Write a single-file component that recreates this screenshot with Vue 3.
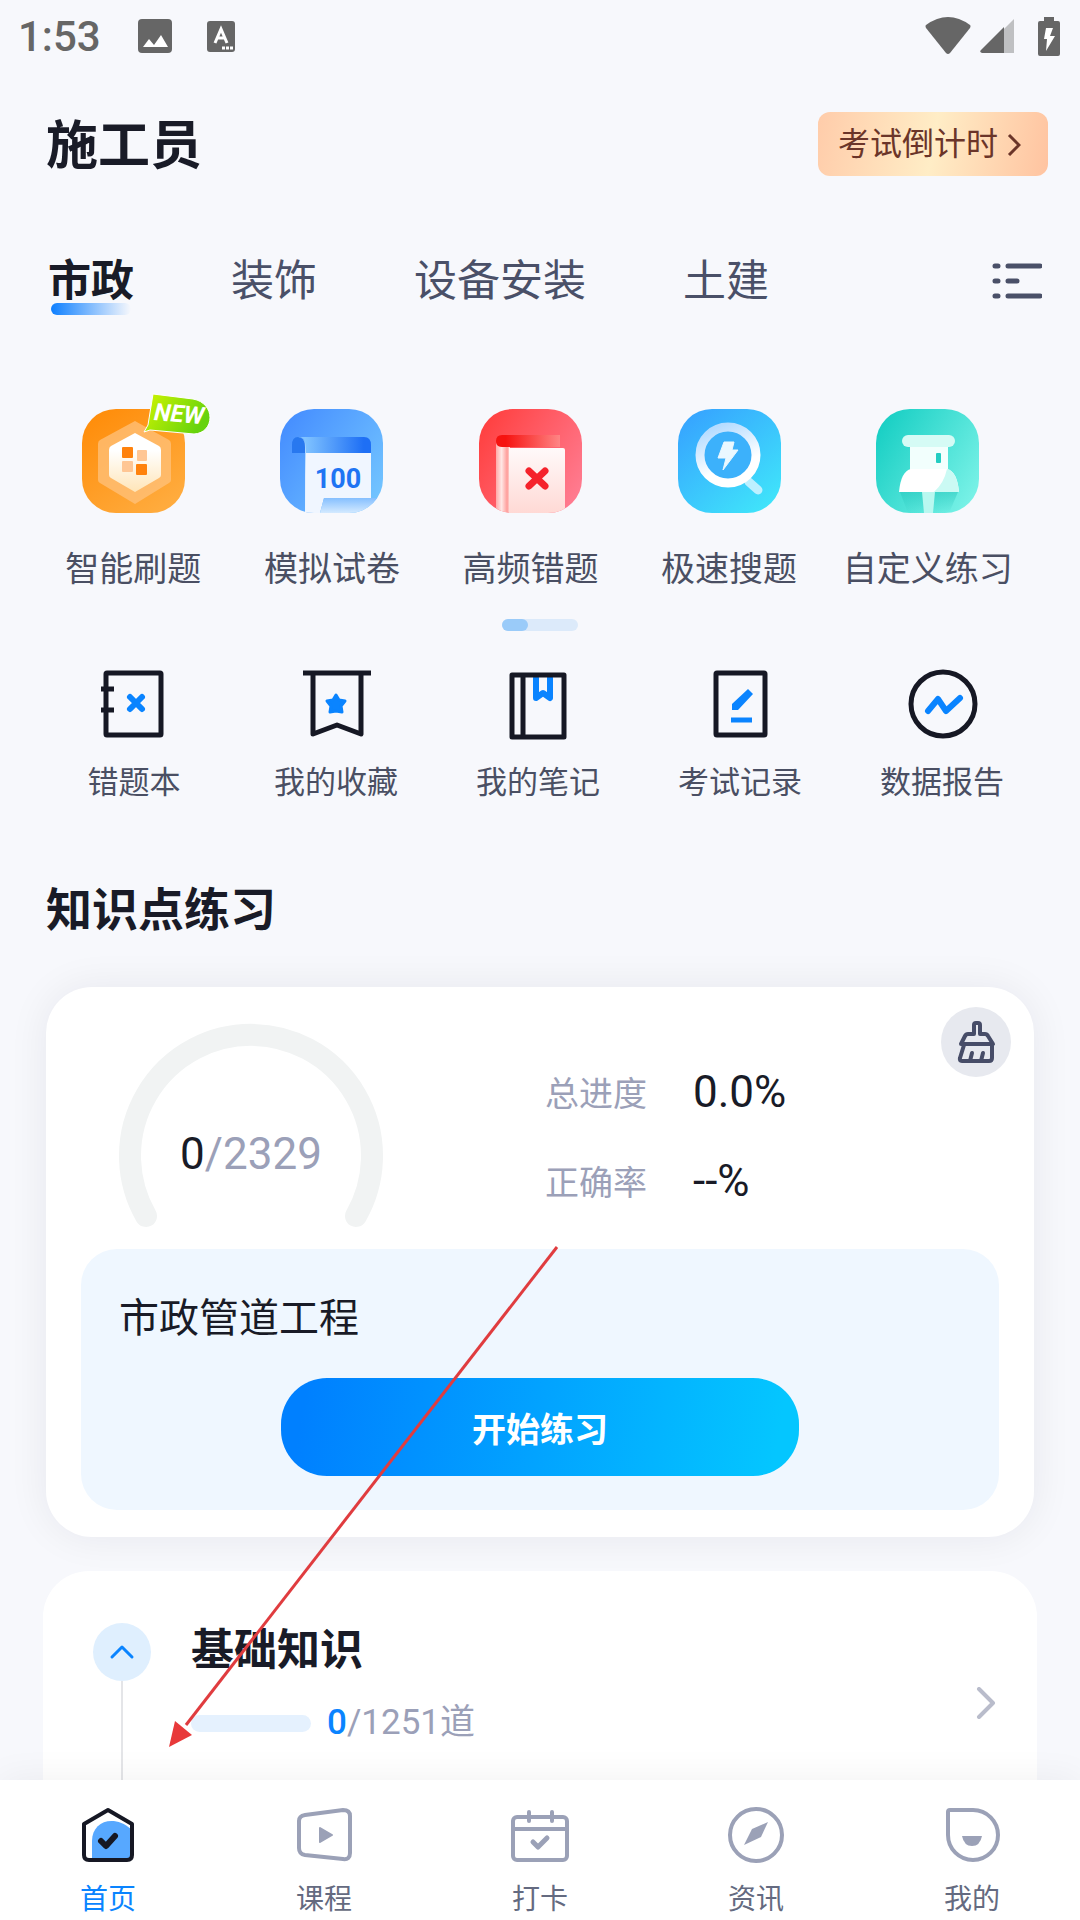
<template>
  <div class="app">
    <div class="status-bar">
      <span class="clock">1:53</span>
      <svg class="status-image" width="34" height="34" viewBox="0 0 34 34">
        <rect width="34" height="34" rx="4" fill="#666"/>
        <path d="M5 28l6-8 5 6 7-10 7 12z" fill="#fff"/>
      </svg>
      <svg class="status-input" width="28" height="31" viewBox="0 0 28 31">
        <rect width="28" height="31" rx="3" fill="#666"/>
        <path d="M8 22l6-14 6 14M11 17h6" fill="none" stroke="#fff" stroke-width="3"/>
        <path d="M15 27h3M19 27h3M23 27h3" stroke="#fff" stroke-width="3"/>
      </svg>
      <span class="spacer"></span>
      <svg width="46" height="38" viewBox="0 0 46 38">
        <path d="M1 8Q23-8 45 8Q46 9 45 11L25 36Q23 38 21 36L1 11Q0 9 1 8z" fill="#666"/>
      </svg>
      <svg class="status-signal" width="34" height="34" viewBox="0 0 34 34">
        <path d="M34 0V34H24V10z" fill="#bfc0c2"/>
        <path d="M24 8V34H2Q-1 33 1 31z" fill="#666"/>
      </svg>
      <svg class="status-battery" width="22" height="39" viewBox="0 0 22 39">
        <path d="M6 0h10v4h4q2 0 2 2v31q0 2-2 2H2q-2 0-2-2V6q0-2 2-2h4z" fill="#666"/>
        <path d="M8 11h7l-3 8h5L8 34l1-12H6z" fill="#fff"/>
      </svg>
    </div>

    <main class="content">
      <header class="page-header">
        <h1>施工员</h1>
        <button class="countdown">
          考试倒计时
          <svg width="14" height="24" viewBox="0 0 14 24" fill="none" stroke="#6b3529" stroke-width="3">
            <path d="M2 3l10 10L2 23"/>
          </svg>
        </button>
      </header>

      <nav class="tabs">
        <button
          v-for="tab in tabs"
          :key="tab"
          class="tab"
          :class="{ 'active': tab === activeTab }"
          @click="activeTab = tab"
        >{{ tab }}</button>
        <button class="tab-menu" aria-label="全部专业">
          <svg width="50" height="38" viewBox="0 0 50 38" fill="none" stroke="#4a5068" stroke-width="5" stroke-linecap="round">
            <path d="M3 4h3M16 4h32M3 19h3M16 19h9M3 34h3M16 34h32"/>
          </svg>
        </button>
      </nav>

      <section class="features">
        <a class="feature" href="#">
          <svg class="feature-icon" viewBox="0 0 103 104">
            <defs>
              <linearGradient id="orange" x1="0" y1="0" x2="0.7" y2="1">
                <stop offset="0" stop-color="#ff8a05"/>
                <stop offset="1" stop-color="#ffab3d"/>
              </linearGradient>
              <linearGradient id="cream" x1="0" y1="0" x2="0" y2="1">
                <stop offset="0.3" stop-color="#fff"/>
                <stop offset="1" stop-color="#ffe5b8"/>
              </linearGradient>
              <linearGradient id="lime" x1="0" y1="0" x2="1" y2="0.4">
                <stop offset="0" stop-color="#d2f500"/>
                <stop offset="1" stop-color="#67d30d"/>
              </linearGradient>
            </defs>
            <rect width="103" height="104" rx="34" fill="url(#orange)"/>
            <path d="M53 12L87 31Q89 32 89 35V71Q89 73 87 74L53 95L18 74Q16 73 16 71V35Q16 32 18 31z" fill="#ffc27c" opacity="0.75"/>
            <path d="M53 24L77 37Q79 38 79 41V66Q79 68 77 69L53 83L29 69Q27 68 27 66V41Q27 38 29 37z" fill="url(#cream)"/>
            <g fill="#ff820d">
              <rect x="40" y="38" width="11" height="11" rx="1"/>
              <rect x="54" y="55" width="11" height="11" rx="1"/>
            </g>
            <g fill="#ffc694">
              <rect x="55" y="41" width="10" height="11" rx="1"/>
              <rect x="40" y="52" width="11" height="11" rx="1"/>
            </g>
            <path d="M71-15L111-10C134-6 133 24 112 25L68 21L62 23L66 16z" fill="url(#lime)" stroke="#fff" stroke-width="1"/>
            <text x="97" y="13" class="new-text" text-anchor="middle" transform="rotate(5 96 6)">NEW</text>
          </svg>
          <span>智能刷题</span>
        </a>

        <a class="feature" href="#">
          <svg class="feature-icon" viewBox="0 0 103 104">
            <defs>
              <linearGradient id="blue" x1="0" y1="0.1" x2="1" y2="0.8">
                <stop offset="0" stop-color="#448cff"/>
                <stop offset="1" stop-color="#72c4ff"/>
              </linearGradient>
              <linearGradient id="roll" x1="0" y1="0" x2="1" y2="0">
                <stop offset="0.1" stop-color="#80c3ff"/>
                <stop offset="0.9" stop-color="#1e6ff5"/>
              </linearGradient>
              <linearGradient id="fold" x1="0" y1="0" x2="0" y2="1">
                <stop offset="0" stop-color="#8bc7ff"/>
                <stop offset="0.5" stop-color="#ddecff"/>
                <stop offset="1" stop-color="#eef6ff"/>
              </linearGradient>
              <linearGradient id="shade" x1="0" y1="0" x2="0" y2="1">
                <stop offset="0" stop-color="#85bfff"/>
                <stop offset="1" stop-color="#d4eaff"/>
              </linearGradient>
              <clipPath id="tile"><rect width="103" height="104" rx="34"/></clipPath>
            </defs>
            <g clip-path="url(#tile)">
              <rect width="103" height="104" fill="url(#blue)"/>
              <path d="M18 28H84Q91 28 91 36V44H25V38z" fill="url(#roll)"/>
              <path d="M12 44V36Q12 28 18 28Q25 28 25 36V44z" fill="#2878ef"/>
              <path d="M25 44H91V89H44L40 104H25z" fill="#f0f6ff"/>
              <path d="M18 28Q25 28 25 38V104H26V40Q26 28 18 28z" fill="url(#fold)"/>
              <path d="M44 89H98L90 104H40z" fill="url(#shade)"/>
              <text x="58" y="79" class="paper-text" text-anchor="middle">100</text>
            </g>
          </svg>
          <span>模拟试卷</span>
        </a>

        <a class="feature" href="#">
          <svg class="feature-icon" viewBox="0 0 103 104">
            <defs>
              <linearGradient id="red" x1="0" y1="0.2" x2="1" y2="0.8">
                <stop offset="0" stop-color="#ff4040"/>
                <stop offset="1" stop-color="#ff7c91"/>
              </linearGradient>
              <linearGradient id="cover" x1="0" y1="0" x2="1" y2="0">
                <stop offset="0.15" stop-color="#f61310"/>
                <stop offset="1" stop-color="#ff8585"/>
              </linearGradient>
              <linearGradient id="sheet" x1="0" y1="0" x2="0" y2="1">
                <stop offset="0" stop-color="#fffafa"/>
                <stop offset="1" stop-color="#ffd9d5"/>
              </linearGradient>
              <linearGradient id="spine" x1="0" y1="0" x2="1" y2="0">
                <stop offset="0" stop-color="#ffaaa8"/>
                <stop offset="0.4" stop-color="#ffe7e5"/>
                <stop offset="0.8" stop-color="#ff9c99"/>
                <stop offset="1" stop-color="#ffe5e3"/>
              </linearGradient>
            </defs>
            <g clip-path="url(#tile)">
              <rect width="103" height="104" fill="url(#red)"/>
              <path d="M23 26H81V38H23Q17 38 17 32Q17 26 23 26z" fill="url(#cover)"/>
              <path d="M17 34Q18 38 23 38H31V104H17z" fill="url(#spine)"/>
              <path d="M30 39H84Q86 39 86 41V104H30z" fill="url(#sheet)"/>
              <path d="M50 62L66 77M66 62L50 77" stroke="#f5222b" stroke-width="7" stroke-linecap="round"/>
            </g>
          </svg>
          <span>高频错题</span>
        </a>

        <a class="feature" href="#">
          <svg class="feature-icon" viewBox="0 0 103 104">
            <defs>
              <linearGradient id="cyan" x1="0.1" y1="0" x2="0.9" y2="1">
                <stop offset="0" stop-color="#36a2ff"/>
                <stop offset="1" stop-color="#40e7fa"/>
              </linearGradient>
              <linearGradient id="ring" x1="0" y1="0" x2="0.4" y2="1">
                <stop offset="0.1" stop-color="#b5dcff"/>
                <stop offset="0.8" stop-color="#fff"/>
              </linearGradient>
            </defs>
            <rect width="103" height="104" rx="34" fill="url(#cyan)"/>
            <path d="M71 73L80 81" stroke="#bdf0ff" stroke-width="9" stroke-linecap="round"/>
            <circle cx="50" cy="46" r="28" fill="#3cb1fb" stroke="url(#ring)" stroke-width="9"/>
            <path d="M46 33H56L54 41H60L45 61L48 49H40z" fill="#eaf8ff" stroke="#eaf8ff" stroke-width="1" stroke-linejoin="round"/>
          </svg>
          <span>极速搜题</span>
        </a>

        <a class="feature" href="#">
          <svg class="feature-icon" viewBox="0 0 103 104">
            <defs>
              <linearGradient id="teal" x1="0" y1="0.2" x2="1" y2="0.8">
                <stop offset="0" stop-color="#18cfc4"/>
                <stop offset="1" stop-color="#7af2e7"/>
              </linearGradient>
              <linearGradient id="pin-shadow" x1="0" y1="0" x2="0" y2="1">
                <stop offset="0" stop-color="#26c5bb" stop-opacity="0.5"/>
                <stop offset="1" stop-color="#26c5bb" stop-opacity="0"/>
              </linearGradient>
            </defs>
            <g clip-path="url(#tile)">
              <rect width="103" height="104" fill="url(#teal)"/>
              <path d="M24 83H82L73 104H32z" fill="url(#pin-shadow)"/>
              <path d="M46 83H59L57 104H48z" fill="#b9f8f0"/>
              <rect x="34" y="36" width="38" height="26" fill="#f2fffd"/>
              <rect x="26" y="26" width="53" height="12" rx="6" fill="#d5fbf5"/>
              <rect x="60" y="44" width="5" height="10" rx="1" fill="#23cdc2"/>
              <path d="M35 60H71Q81 62 83 83H23Q25 62 35 60z" fill="#fff"/>
              <path d="M71 60Q81 62 83 83H58Q68 74 71 60z" fill="#cbfaf4"/>
            </g>
          </svg>
          <span>自定义练习</span>
        </a>
      </section>

      <div class="pager"><i></i></div>

      <section class="shortcuts">
        <a class="shortcut" href="#">
          <svg class="line-icon" viewBox="0 0 72 72">
            <rect x="8" y="4" width="55" height="62" rx="1"/>
            <path d="M3 20h13M3 41h13"/>
            <path class="accent" d="M32 28l12 12M44 28L32 40" stroke-linecap="butt"/>
          </svg>
          <span>错题本</span>
        </a>
        <a class="shortcut" href="#">
          <svg class="line-icon" viewBox="0 0 72 72">
            <path d="M3 4h68M13 4v61l24-9 24 9V4"/>
            <path class="accent-fill" d="M36 26l3 5 6 1-4 5 1 6-6-1-6 1 1-6-4-5 6-1z"/>
          </svg>
          <span>我的收藏</span>
        </a>
        <a class="shortcut" href="#">
          <svg class="line-icon" viewBox="0 0 72 72">
            <path class="accent" d="M34 9v20l7-5 7 5V9"/>
            <path d="M10 6h52v62H10zM21 6v62"/>
          </svg>
          <span>我的笔记</span>
        </a>
        <a class="shortcut" href="#">
          <svg class="line-icon" viewBox="0 0 72 72">
            <rect x="12" y="4" width="49" height="62" rx="1"/>
            <path d="M28 41v-6l16-15 5 5-15 16z" fill="#0a84ff" stroke="none"/>
            <path d="M27 51h21" stroke="#0a84ff"/>
          </svg>
          <span>考试记录</span>
        </a>
        <a class="shortcut" href="#">
          <svg class="line-icon" viewBox="0 0 72 72">
            <circle cx="37" cy="35" r="32"/>
            <path class="accent" d="M22 42l10-12 8 12 14-13"/>
          </svg>
          <span>数据报告</span>
        </a>
      </section>

      <h2>知识点练习</h2>

      <section class="card progress-card">
        <div class="summary">
          <div class="gauge">
            <svg width="266" height="206" viewBox="0 0 266 206" fill="none">
              <path d="M28 193A121 121 0 1 1 238 193" stroke="#f1f3f3" stroke-width="22" stroke-linecap="round"/>
            </svg>
            <div class="gauge-text">0<span>/2329</span></div>
          </div>
          <dl class="stats">
            <dt>总进度</dt>
            <dd>0.0%</dd>
            <dt>正确率</dt>
            <dd>--%</dd>
          </dl>
          <button class="clear-btn" aria-label="清空记录">
            <svg width="70" height="70" viewBox="0 0 70 70" fill="none" stroke="#474d68" stroke-width="4" stroke-linejoin="round" stroke-linecap="round">
              <path d="M33 27V18q0-2 2-2h2q2 0 2 2v9h5q2 0 3 2l5 8H20l4-8q1-2 3-2z"/>
              <path d="M23 38l-4 13q-1 3 2 3h27q3 0 3-3V38M31 46l-2 8M42 46l-2 8"/>
            </svg>
          </button>
        </div>
        <div class="chapter">
          <h3>市政管道工程</h3>
          <button class="start-btn">开始练习</button>
        </div>
      </section>

      <section class="card topic-card">
        <div class="topic-rail">
          <button class="collapse-btn" aria-label="收起">
            <svg width="26" height="16" viewBox="0 0 26 16" fill="none" stroke="#0a84ff" stroke-width="3" stroke-linecap="round" stroke-linejoin="round">
              <path d="M3 13L13 3l10 10"/>
            </svg>
          </button>
        </div>
        <div class="topic-body">
          <h3>基础知识</h3>
          <div class="topic-progress">
            <span class="bar"></span>
            <span class="count"><b>0</b>/1251道</span>
          </div>
        </div>
        <svg class="topic-arrow" width="20" height="32" viewBox="0 0 20 32" fill="none" stroke="#b9bccb" stroke-width="4" stroke-linecap="round" stroke-linejoin="round">
          <path d="M3 2l14 14L3 30"/>
        </svg>
      </section>
    </main>

    <nav class="tab-bar">
      <a class="tab-item active" href="#">
        <svg width="60" height="60" viewBox="0 0 60 60" fill="none">
          <path d="M14 53V36C14 16 36 9 53 24V53z" fill="#57a8ff"/>
          <path d="M30 5L54 19V50Q54 55 49 55H11Q6 55 6 50V19z" stroke="#161824" stroke-width="4" stroke-linejoin="round"/>
          <path d="M23 36l5 5 9-10" stroke="#161824" stroke-width="6" stroke-linecap="round" stroke-linejoin="round"/>
        </svg>
        <span>首页</span>
      </a>
      <a class="tab-item" href="#">
        <svg width="60" height="60" viewBox="0 0 60 60" fill="none" stroke="#9ba1b7" stroke-width="4">
          <path d="M11 10L49 5Q56 5 56 11V48Q56 55 49 54L11 50Q5 49 5 43V16Q5 11 11 10z"/>
          <path d="M26 23l12 7-12 7z" fill="#9ba1b7" stroke-width="2" stroke-linejoin="round"/>
        </svg>
        <span>课程</span>
      </a>
      <a class="tab-item" href="#">
        <svg width="60" height="60" viewBox="0 0 60 60" fill="none" stroke="#9ba1b7" stroke-width="4" stroke-linecap="round" stroke-linejoin="round">
          <rect x="3" y="12" width="54" height="43" rx="4"/>
          <path d="M3 24h54M19 7v9M42 7v9"/>
          <path d="M23 37l5 5 9-9" stroke-width="5"/>
        </svg>
        <span>打卡</span>
      </a>
      <a class="tab-item" href="#">
        <svg width="60" height="60" viewBox="0 0 60 60" fill="none">
          <circle cx="30" cy="30" r="26" stroke="#9ba1b7" stroke-width="4"/>
          <path d="M42 17l-7 15-17 8 8-16z" fill="#9ba1b7"/>
        </svg>
        <span>资讯</span>
      </a>
      <a class="tab-item" href="#">
        <svg width="60" height="60" viewBox="0 0 60 60" fill="none">
          <path d="M8 5H31A25 25 0 1 1 6 30V7Q6 5 8 5z" stroke="#9ba1b7" stroke-width="4"/>
          <path d="M20 31h20q-2 10-10 10t-10-10z" fill="#9ba1b7"/>
        </svg>
        <span>我的</span>
      </a>
    </nav>

    <svg class="pointer-line" width="392" height="502" viewBox="0 0 392 502">
      <path d="M388 1L17 479" stroke="#e03c3f" stroke-width="3"/>
      <path d="M0 501l6-26 17 14z" fill="#e8393a"/>
    </svg>
  </div>
</template>

<script setup>
import { ref } from 'vue'

const tabs = ['市政', '装饰', '设备安装', '土建']
const activeTab = ref('市政')
</script>

<style>
body {
  margin: 0;
  background: #f7f8fc;
}
</style>

<style scoped>
.app {
  position: relative;
  display: flex;
  flex-direction: column;
  height: 100vh;
  overflow: hidden;
  background: #f7f8fc;
  color: #191b27;
  font-family: Roboto, "Noto Sans CJK SC", sans-serif;
}

button {
  border: none;
  padding: 0;
  background: none;
  font-family: inherit;
  color: inherit;
  cursor: pointer;
}

a {
  color: inherit;
  text-decoration: none;
}

h1, h2, h3, dl, dd {
  margin: 0;
}

svg {
  display: block;
  flex: none;
}

/* Status bar */
.status-bar {
  display: flex;
  align-items: center;
  flex: none;
  height: 72px;
  padding: 0 20px 0 18px;
  color: #666;
}

.clock {
  font-size: 42px;
  font-weight: 500;
}

.status-image {
  margin-left: 37px;
}

.status-input {
  margin-left: 35px;
}

.spacer {
  flex: 1;
}

.status-signal {
  margin-left: 9px;
}

.status-battery {
  margin-left: 24px;
}

.content {
  flex: 1;
  min-height: 0;
  overflow: hidden;
}

.page-header {
  display: flex;
  align-items: center;
  justify-content: space-between;
  height: 64px;
  margin-top: 40px;
  padding: 0 32px 0 46px;
}

h1 {
  padding-top: 6px;
  font-size: 52px;
  line-height: 64px;
}

.countdown {
  display: flex;
  align-items: center;
  gap: 9px;
  height: 64px;
  padding: 0 27px 0 20px;
  border-radius: 12px;
  background: linear-gradient(100deg, #ffccaa 0%, #ffedc6 50%, #ffc3a0 100%);
  color: #6b3529;
  font-size: 32px;
  line-height: 62px;
}

/* Tabs */
.tabs {
  display: flex;
  align-items: center;
  gap: 97px;
  margin-top: 75px;
  padding: 0 38px 0 48px;
}

.tab {
  position: relative;
  color: #4a5068;
  font-size: 43px;
  line-height: 60px;
}

.tab.active {
  color: #191b27;
  font-weight: 700;
}

.tab.active::after {
  content: '';
  position: absolute;
  left: 3px;
  right: 3px;
  bottom: -4px;
  height: 12px;
  border-radius: 6px;
  background: linear-gradient(90deg, #0f80ff, #f7f8fc);
}

.tab-menu {
  margin-left: auto;
}

/* Feature grid */
.features {
  display: grid;
  grid-template-columns: repeat(5, 1fr);
  margin-top: 98px;
  padding: 0 53px 0 34px;
}

.feature {
  display: flex;
  flex-direction: column;
  align-items: center;
  gap: 36px;
  color: #4a4f63;
  font-size: 34px;
  line-height: 40px;
  white-space: nowrap;
}

.feature-icon {
  width: 103px;
  height: 104px;
  overflow: visible;
}

.new-text {
  fill: #fff;
  font-family: Roboto, sans-serif;
  font-size: 24px;
  font-weight: 700;
  font-style: italic;
}

.paper-text {
  fill: #1f74f3;
  font-family: Roboto, sans-serif;
  font-size: 27px;
  font-weight: 700;
}

.pager {
  width: 76px;
  height: 12px;
  margin: 30px auto 0;
  border-radius: 6px;
  background: #dceafa;
}

.pager i {
  display: block;
  width: 26px;
  height: 12px;
  border-radius: 6px;
  background: #9acbf9;
}

.shortcuts {
  display: grid;
  grid-template-columns: repeat(5, 1fr);
  margin-top: 38px;
  padding: 0 37px 0 33px;
}

.shortcut {
  display: flex;
  flex-direction: column;
  align-items: center;
  gap: 24px;
  color: #4a4f63;
  font-size: 31px;
  line-height: 36px;
}

.line-icon {
  width: 72px;
  height: 72px;
  fill: none;
  stroke: #161824;
  stroke-width: 5;
  stroke-linejoin: round;
}

.accent {
  stroke: #0a84ff;
  stroke-width: 6;
  stroke-linecap: round;
}

.accent-fill {
  fill: #0a84ff;
  stroke: #0a84ff;
  stroke-width: 3;
}

h2 {
  margin-top: 79px;
  padding-left: 46px;
  font-size: 46px;
  line-height: 60px;
}

/* Progress card */
.card {
  background: #fff;
  border-radius: 46px;
}

.progress-card {
  margin: 47px 46px 0;
  padding: 0 35px 27px;
  box-shadow: 0 0 40px rgba(20, 20, 40, 0.07);
}

.summary {
  position: relative;
  display: flex;
  gap: 161px;
  height: 262px;
  padding-left: 37px;
}

.gauge {
  display: grid;
  margin-top: 36px;
  align-self: start;
}

.gauge svg,
.gauge-text {
  grid-area: 1 / 1;
}

.gauge-text {
  align-self: center;
  justify-self: center;
  margin-top: 56px;
  font-size: 44px;
}

.gauge-text span {
  color: #9ba0b8;
}

.stats {
  display: grid;
  grid-template-columns: auto auto;
  grid-auto-rows: 89px;
  align-items: center;
  align-self: start;
  column-gap: 46px;
  margin-top: 60px;
}

dt {
  color: #9ba0b8;
  font-size: 34px;
}

dd {
  font-size: 44px;
}

.clear-btn {
  position: absolute;
  top: 20px;
  right: -12px;
  border-radius: 50%;
  background: #e7e9ef;
}

.chapter {
  display: flex;
  flex-direction: column;
  padding: 40px 38px 34px;
  border-radius: 36px;
  background: #eff7ff;
}

.chapter h3 {
  font-size: 40px;
  font-weight: 400;
  line-height: 60px;
}

.start-btn {
  height: 98px;
  margin: 29px 162px 0;
  border-radius: 46px;
  background: linear-gradient(100deg, #0080ff 5%, #04c6ff 95%);
  color: #fff;
  font-size: 34px;
  font-weight: 700;
}

/* Topic card */
.topic-card {
  display: flex;
  height: 280px;
  margin: 34px 43px 0;
  padding: 52px 41px 0 50px;
  box-sizing: border-box;
}

.topic-rail {
  display: flex;
  flex-direction: column;
  align-items: center;
  width: 58px;
}

.topic-rail::after {
  content: '';
  flex: 1;
  width: 2px;
  background: #e4e5e8;
}

.collapse-btn {
  display: flex;
  align-items: center;
  justify-content: center;
  width: 58px;
  height: 58px;
  border-radius: 50%;
  background: #dfeffe;
}

.topic-body {
  flex: 1;
  margin-left: 40px;
}

.topic-body h3 {
  font-size: 43px;
  line-height: 54px;
}

.topic-progress {
  display: flex;
  align-items: center;
  gap: 16px;
  margin-top: 22px;
}

.bar {
  width: 120px;
  height: 17px;
  border-radius: 9px;
  background: #e5f1fe;
}

.count {
  color: #9ba0b8;
  font-size: 35px;
  line-height: 48px;
}

.count b {
  color: #0a84ff;
  font-weight: 500;
}

.topic-arrow {
  margin-top: 64px;
}

/* Bottom navigation */
.tab-bar {
  position: relative;
  display: grid;
  grid-template-columns: repeat(5, 1fr);
  flex: none;
  height: 140px;
  background: #fff;
  box-shadow: 0 0 36px rgba(0, 0, 0, 0.06);
}

.tab-item {
  display: flex;
  flex-direction: column;
  align-items: center;
  gap: 17px;
  padding-top: 25px;
  color: #646a80;
  font-size: 28px;
  line-height: 36px;
}

.tab-item.active {
  color: #0a84ff;
}

/* Pointer drawn over the cards */
.pointer-line {
  position: absolute;
  left: 169px;
  top: 1246px;
  pointer-events: none;
}
</style>
